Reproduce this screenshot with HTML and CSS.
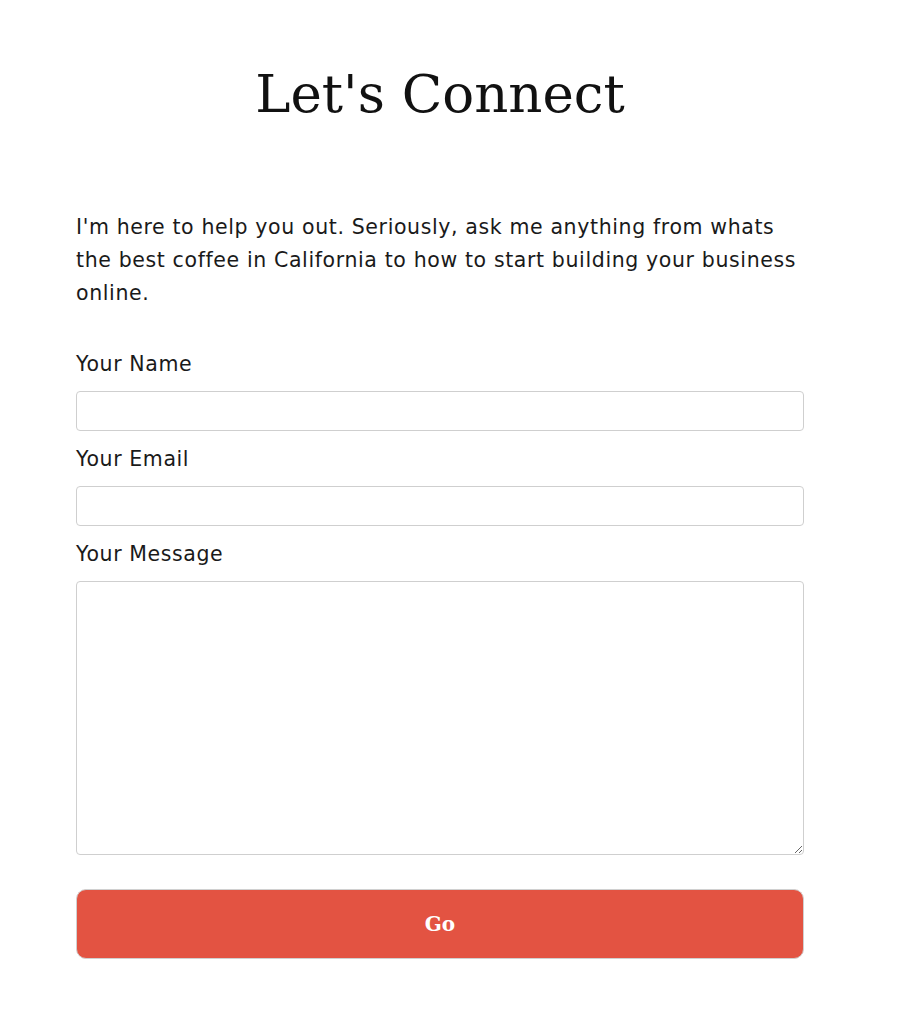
FILE: index.html
```html
<!DOCTYPE html>
<html lang="en">
<head>
  <meta charset="UTF-8" />
  <meta name="viewport" content="width=device-width, initial-scale=1.0" />
  <title>Let's Connect</title>
  <link rel="stylesheet" href="styles.css">
</head>
<body>
  <main class="contact">
    <h1>Let's Connect</h1>
    <p class="intro">I'm here to help you out. Seriously, ask me anything from whats the best coffee in California to how to start building your business online.</p>
    <form class="contact-form">
      <label for="name">Your Name</label>
      <input type="text" id="name" />
      <label for="email">Your Email</label>
      <input type="email" id="email" />
      <label for="message">Your Message</label>
      <textarea id="message"></textarea>
      <button type="submit" class="btn">Go</button>
    </form>
  </main>
</body>
</html>
```

FILE: styles.css
```css
body {
  margin: 0;
  padding: 0;
  background-color: #fff;
  color: #1a1a1a;
  font-family: "DejaVu Sans", sans-serif;
}
.contact {
  width: 728px;
  margin: 0 0 0 76px;
}
h1 {
  font-family: "DejaVu Serif", serif;
  font-weight: normal;
  font-size: 53px;
  line-height: 80px;
  text-align: center;
  margin: 54px 0 0;
  color: #111;
}
.intro {
  font-size: 20.5px;
  letter-spacing: 0.62px;
  line-height: 33px;
  margin: 77px 0 39px;
}
.contact-form {
  display: flex;
  flex-direction: column;
}
label {
  font-size: 20.5px;
  letter-spacing: 0.6px;
  line-height: 30px;
  margin-bottom: 12px;
}
input,
textarea {
  box-sizing: border-box;
  width: 100%;
  border: 1px solid #cfcfcf;
  border-radius: 4px;
  font-size: 16px;
  margin: 0 0 13px;
}
input {
  height: 40px;
}
textarea {
  height: 274px;
  margin-bottom: 34px;
}
.btn {
  height: 70px;
  background-color: #e35342;
  color: #fff;
  border: 1px solid #d0d0d0;
  border-radius: 10px;
  font-family: "DejaVu Serif", serif;
  font-weight: bold;
  font-size: 20px;
  cursor: pointer;
}
```
